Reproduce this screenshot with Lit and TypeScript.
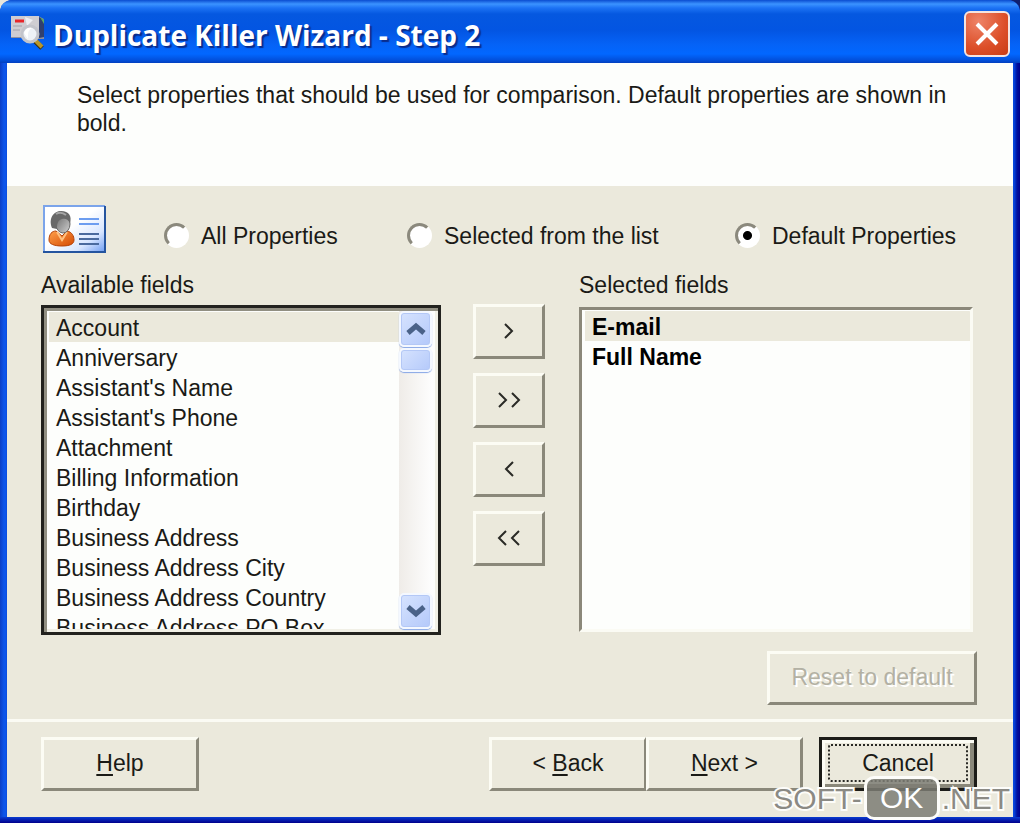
import { LitElement, html, css, svg } from "lit";
import { customElement, state } from "lit/decorators.js";

const AVAILABLE = [
  "Account",
  "Anniversary",
  "Assistant's Name",
  "Assistant's Phone",
  "Attachment",
  "Billing Information",
  "Birthday",
  "Business Address",
  "Business Address City",
  "Business Address Country",
  "Business Address PO Box",
];

const SELECTED = ["E-mail", "Full Name"];

const MODES = ["All Properties", "Selected from the list", "Default Properties"];

const chevron = (kind: string) => {
  const shapes: Record<string, unknown> = {
    right: svg`<path d="M9 3l7 7-7 7"/>`,
    dright: svg`<path d="M3 3l7 7-7 7M16 3l7 7-7 7"/>`,
    left: svg`<path d="M17 3l-7 7 7 7"/>`,
    dleft: svg`<path d="M10 3l-7 7 7 7M23 3l-7 7 7 7"/>`,
  };
  return html`<svg class="chev" viewBox="0 0 26 20" aria-hidden="true">${shapes[kind]}</svg>`;
};

const appIcon = html`<svg class="app-icon" viewBox="0 2 36 36" aria-hidden="true">
  <path d="M2 2h27l6 3v20h-6v-1H2z" fill="#8d90a0" />
  <path d="M2 2h28v21H2z" fill="#cfcdd2" />
  <path d="M30 3l5 3v17l-5 1z" fill="#31406e" />
  <path d="M31 3l4 3v4z" fill="#5fae62" />
  <path d="M6 7h9" stroke="#e8262a" stroke-width="3" />
  <path d="M4 12h9M4 16h7" stroke="#b9b7be" stroke-width="2" />
  <path d="M16 3l8 3-6 6z" fill="#eeeef2" />
  <path d="M26 27l7 7" stroke="#3a2f10" stroke-width="5" />
  <path d="M26 26l7 7" stroke="#b8962a" stroke-width="4" />
  <circle cx="21" cy="20" r="8" fill="#eef1f6" stroke="#c3c4cb" stroke-width="3" />
  <path d="M15 19q2-6 8-5-5 2-4 11z" fill="#fff" />
</svg>`;

const cardIcon = html`<svg class="card-icon" viewBox="0 0 64 48" aria-hidden="true">
  <defs>
    <linearGradient id="card" x1="0" y1="0" x2="1" y2="1">
      <stop offset=".45" stop-color="#fff" /><stop offset=".75" stop-color="#d8e6ff" /><stop offset="1" stop-color="#6f9df2" />
    </linearGradient>
    <linearGradient id="shirt" x1="0" y1="0" x2="1" y2="1">
      <stop offset="0" stop-color="#ffa04a" /><stop offset="1" stop-color="#d44a04" />
    </linearGradient>
    <linearGradient id="face" x1="0" y1="0" x2="1" y2="1">
      <stop offset="0" stop-color="#6a6a6a" /><stop offset="1" stop-color="#d0d0d0" />
    </linearGradient>
  </defs>
  <rect x="1" y="1" width="61" height="46" fill="url(#card)" />
  <path d="M1 47V1h61" fill="none" stroke="#7ba4ea" stroke-width="2" />
  <path d="M0 47h62V1" fill="none" stroke="#24549f" stroke-width="2" />
  <path d="M6 35c0-6 3-9 7-9l6 5 5-5c5 1 7 5 7 9 0 4-4 6-12 6S6 39 6 35z" fill="url(#shirt)" stroke="#b5440a" />
  <path d="M14 27l5 8 5-8" fill="none" stroke="#ffc080" stroke-width="2" />
  <ellipse cx="20" cy="19" rx="7" ry="9" fill="url(#face)" stroke="#666" />
  <path d="M9 23C5 13 11 6 18 6c8 0 11 5 9 12-2-4-5-5-8-4-4 1-5 4-5 10z" fill="#686868" />
  <path d="M13 9q5-3 10 1" stroke="#a5a5a5" stroke-width="2" fill="none" />
  <path d="M36 14h20M36 19h20" stroke="#6d9df0" stroke-width="2" />
  <path d="M36 29h20M36 34h20M36 39h20" stroke="#4a6a9e" stroke-width="2" />
</svg>`;

@customElement("app-root")
export class AppRoot extends LitElement {
  @state() private mode = 2;

  static styles = css`
    :host {
      display: block;
      font: 23px/28px "Liberation Sans", Arial, sans-serif;
      color: #1a1a16;
    }
    * {
      box-sizing: border-box;
    }
    .backdrop {
      background: linear-gradient(90deg, #e8e6dc 50%, #10206e 50%);
    }
    .window {
      position: relative;
      display: flex;
      flex-direction: column;
      min-height: 100vh;
      padding: 0 7px 6px;
      border-radius: 12px 12px 0 0;
      background:
        linear-gradient(180deg, #0a3cd0, #00008c) bottom / 100% 6px no-repeat,
        linear-gradient(90deg, #0c3ec4 0, #0d55ea 4px, #0d55ea 6px, #0a48d8 7px, #0a48d8 calc(100% - 7px), #0546e0 calc(100% - 6px), #0012a0 calc(100% - 3px), #00008c 100%);
      overflow: hidden;
    }
    .title {
      display: flex;
      align-items: center;
      gap: 8px;
      height: 63px;
      margin: 0 -7px;
      padding: 4px 10px 0 9px;
      background: linear-gradient(180deg, #0a4cd0 0, #3b93ff 4px, #1c72f4 8px, #0558e0 14px, #0355e2 30px, #0562f6 44px, #0267ff 54px, #0250dc 60px, #0240c0 100%);
      color: #fff;
    }
    .title h1 {
      flex: 1;
      margin: 0;
      padding-top: 2px;
      font: bold 28px/36px "Open Sans", "Noto Sans", sans-serif;
      text-shadow: 2px 2px 1px #0a2c8c;
    }
    .app-icon {
      width: 36px;
      height: 36px;
    }
    .close {
      display: grid;
      place-items: center;
      width: 46px;
      height: 46px;
      padding: 0;
      border: 2px solid #f4e4e0;
      border-radius: 6px;
      background: radial-gradient(circle at 30% 20%, #ee8468, #dc4e28 60%, #c83c14);
    }
    .close svg {
      width: 26px;
      height: 26px;
      stroke: #fff;
      stroke-width: 4;
    }
    .intro {
      min-height: 123px;
      padding: 18px 60px 40px 70px;
      background: #fdfefc;
    }
    .intro p {
      margin: 0;
    }
    .body {
      flex: 1;
      padding: 19px 36px 14px 34px;
      background: #ebe9dc;
    }
    .modes {
      display: grid;
      grid-template-columns: 121fr 243fr 328fr 242fr;
      align-items: center;
      padding-left: 2px;
    }
    .card-icon {
      width: 64px;
      height: 48px;
    }
    .mode {
      display: flex;
      align-items: center;
      gap: 12px;
      padding-top: 13px;
      white-space: nowrap;
    }
    .mode input {
      appearance: none;
      width: 25px;
      height: 25px;
      margin: 0;
      border: 3px solid;
      border-color: #8b897d #fff #fff #8b897d;
      border-radius: 50%;
      background: #fff;
    }
    .mode input:checked {
      background: radial-gradient(circle, #000 4px, #fff 5px);
    }
    .fields {
      display: grid;
      grid-template-columns: 400fr 74px 394fr;
      column-gap: 32px;
      margin-right: 4px;
      padding-top: 18px;
    }
    .moves {
      display: flex;
      flex-direction: column;
      gap: 14px;
      padding-top: 33px;
    }
    .field {
      display: flex;
      flex-direction: column;
      gap: 6px;
    }
    .list {
      display: flex;
      height: 330px;
      border: 2px solid;
      border-color: #8b887a #fbfbf4 #fbfbf4 #8b887a;
      background: #fdfefc;
    }
    .framed {
      padding: 3px 5px 3px 3px;
      border: 3px solid #22221e;
      box-shadow: inset 3px 3px #918f82, inset -3px -3px #f1f0e6;
    }
    .right {
      height: 325px;
      margin-top: 2px;
      padding: 0 0 0 1px;
      border-width: 3px;
    }
    select {
      flex: 1;
      min-width: 0;
      height: 100%;
      margin: 0;
      padding: 1px 0 0 2px;
      border: 0;
      outline: 0;
      background: transparent;
      font: inherit;
      color: inherit;
      overflow: hidden;
      scrollbar-width: none;
    }
    option {
      min-height: 30px;
      padding: 3px 7px 0;
    }
    option:first-child {
      background: #ebe9dc;
    }
    .right option {
      font-weight: bold;
      color: #000;
    }
    .scroll {
      display: flex;
      flex-direction: column;
      width: 34px;
      background: linear-gradient(90deg, #efece8, #fefefe);
    }
    .scroll button,
    .thumb {
      display: grid;
      place-items: center;
      width: 33px;
      height: 36px;
      padding: 0;
      border: 2px solid #f4f8ff;
      border-radius: 5px;
      background: linear-gradient(135deg, #d6e3fe, #b4c9fa);
      box-shadow: inset 0 0 0 1px #b4c8f6, 0 1px 1px #86a6e6;
    }
    .scroll .thumb {
      height: 24px;
      margin-top: 1px;
    }
    .scroll .down {
      margin-top: auto;
    }
    .scroll svg {
      width: 20px;
      height: 14px;
      fill: none;
      stroke: #4a6288;
      stroke-width: 5;
    }
    .btn {
      height: 54px;
      padding: 0 0 2px;
      border: 3px solid;
      border-color: #fcfcf4 #8a887a #8a887a #fcfcf4;
      background: #ebe9dc;
      font: inherit;
      color: inherit;
    }
    .moves .btn {
      display: grid;
      place-items: center;
      width: 72px;
      height: 55px;
    }
    .chev {
      width: 26px;
      height: 20px;
      fill: none;
      stroke: #2a2a26;
      stroke-width: 2;
    }
    .reset {
      display: block;
      width: 210px;
      margin: 16px 0 0 auto;
    }
    .reset:disabled {
      color: #b3b1a4;
      text-shadow: 2px 2px #fff;
    }
    .footer {
      display: flex;
      padding: 15px 36px 26px 34px;
      border-top: 3px solid #fbfbf4;
      background: #ebe9dc;
    }
    .footer .btn {
      width: 158px;
    }
    .footer .pair {
      display: flex;
      margin: 0 16px 0 auto;
    }
    .pair .btn {
      width: 157px;
    }
    .pair .btn:first-child {
      border-right-width: 2px;
    }
    u {
      text-decoration-thickness: 2px;
      text-underline-offset: 3px;
    }
    .footer .cancel {
      padding: 3px;
      border: 3px solid #1c1c18;
      box-shadow: inset 3px 3px #fcfcf4, inset -4px -4px #8a887a;
    }
    .cancel span {
      display: block;
      height: 38px;
      margin: 1px 3px 3px;
      border: 2px dotted #2a2a26;
      border-radius: 3px;
      line-height: 34px;
    }
    .mark {
      position: absolute;
      right: 10px;
      bottom: 3px;
      display: flex;
      align-items: center;
      font: 30px/43px "Liberation Sans", Arial, sans-serif;
      color: #8b8a84;
      -webkit-text-stroke: 4px #fdfdfa;
      paint-order: stroke fill;
      pointer-events: none;
    }
    .mark b {
      width: 76px;
      margin: 0 2px;
      border: 3px solid #fdfdfa;
      border-radius: 10px;
      background: rgba(125, 124, 116, 0.85);
      font-weight: normal;
      line-height: 38px;
      text-align: center;
      color: #fff;
      -webkit-text-stroke: 0;
    }
  `;

  render() {
    return html`
      <div class="backdrop">
        <main class="window">
          <header class="title">
            ${appIcon}
            <h1>Duplicate Killer Wizard - Step 2</h1>
            <button class="close" aria-label="Close">
              <svg viewBox="0 0 26 26" aria-hidden="true"><path d="M3 3l20 20M23 3L3 23" /></svg>
            </button>
          </header>
          <section class="intro">
            <p>Select properties that should be used for comparison. Default properties are shown in bold.</p>
          </section>
          <section class="body">
            <div class="modes" role="radiogroup" aria-label="Properties to compare">
              ${cardIcon}
              ${MODES.map(
                (name, i) => html`<label class="mode">
                  <input type="radio" name="mode" .checked=${this.mode === i} @change=${() => (this.mode = i)} />
                  ${name}
                </label>`
              )}
            </div>
            <div class="fields">
              <div class="field">
                <label for="available">Available fields</label>
                <div class="list framed">
                  <select id="available" size="11">
                    ${AVAILABLE.map((f) => html`<option>${f}</option>`)}
                  </select>
                  <div class="scroll">
                    <button aria-label="Scroll up"><svg viewBox="0 0 20 14"><path d="M2 11l8-7 8 7" /></svg></button>
                    <div class="thumb"></div>
                    <button class="down" aria-label="Scroll down"><svg viewBox="0 0 20 14"><path d="M2 3l8 7 8-7" /></svg></button>
                  </div>
                </div>
              </div>
              <div class="moves">
                <button class="btn" aria-label="Add">${chevron("right")}</button>
                <button class="btn" aria-label="Add all">${chevron("dright")}</button>
                <button class="btn" aria-label="Remove">${chevron("left")}</button>
                <button class="btn" aria-label="Remove all">${chevron("dleft")}</button>
              </div>
              <div class="field">
                <label for="selected">Selected fields</label>
                <div class="list right">
                  <select id="selected" size="10">
                    ${SELECTED.map((f) => html`<option>${f}</option>`)}
                  </select>
                </div>
              </div>
            </div>
            <button class="btn reset" disabled>Reset to default</button>
          </section>
          <footer class="footer">
            <button class="btn"><u>H</u>elp</button>
            <div class="pair">
              <button class="btn">&lt; <u>B</u>ack</button>
              <button class="btn"><u>N</u>ext &gt;</button>
            </div>
            <button class="btn cancel"><span>Cancel</span></button>
          </footer>
          <div class="mark"><span>SOFT-</span><b>OK</b><span>.NET</span></div>
        </main>
      </div>
    `;
  }
}
